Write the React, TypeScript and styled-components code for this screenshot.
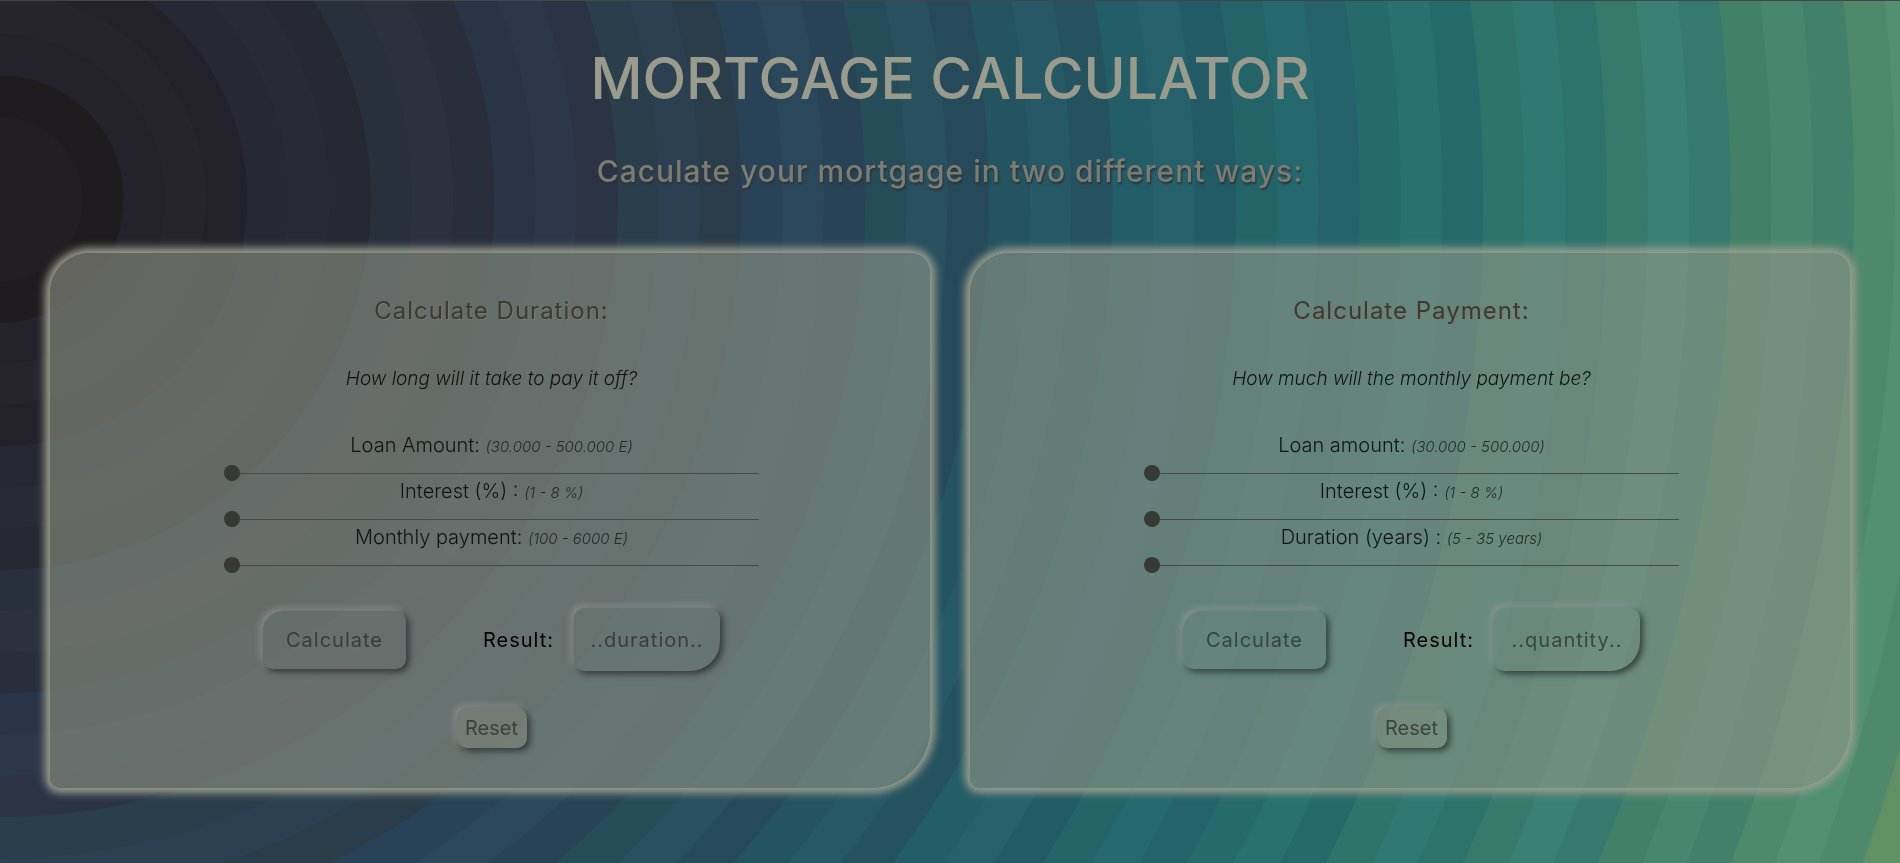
import React, { useState } from "react";
import styled, { createGlobalStyle } from "styled-components";

const GlobalStyle = createGlobalStyle`
  * { box-sizing: border-box; }
  body {
    margin: 0;
    background: #2d736b;
    font-family: Inter, Roboto, "Liberation Sans", sans-serif;
    color: #101413;
  }
`;

const RING = 41.2;
const RINGS = [
  "#221f23", "#221f23", "#1f1c20",
  "#24222b", "#26242d", "#23212a",
  "#262933", "#282b35", "#262832",
  "#282f3d", "#2c313f", "#282e3b",
  "#293546", "#2c3849", "#2a3445",
  "#2b3e4b", "#2c4051", "#2b3d4a",
  "#284357", "#2b475a", "#284256",
  "#264c5a", "#29505f", "#264a5a",
  "#245460", "#275866", "#24535f",
  "#235d67", "#25606b", "#225b65",
  "#246468", "#25696e", "#256269",
  "#256b6b", "#297170", "#256a6b",
  "#2e746b", "#2f7972", "#2d736b",
  "#377a6c", "#3a8173", "#367a6d",
  "#43806a", "#478770", "#42806b",
  "#4f896b", "#529071", "#4e896c",
  "#629065",
];

const Backdrop = styled.svg`
  position: fixed;
  inset: 0;
  width: 100%;
  height: 100%;
  z-index: -1;
`;

const Page = styled.main`
  min-height: 100vh;
  padding: 43px 50px 75px;
  border-top: 1px solid #444546;
`;

const Title = styled.h1`
  margin: 0 0 39px;
  font-size: 57px;
  line-height: 70px;
  font-weight: 500;
  text-align: center;
  text-transform: uppercase;
  color: #999b8d;
`;

const Subtitle = styled.h2`
  margin: 0 0 64px;
  font-size: 30px;
  line-height: 36px;
  font-weight: 500;
  letter-spacing: 1px;
  text-align: center;
  color: #7b7c74;
  text-shadow: 1px 2px 2px #2d3436;
`;

const Cards = styled.div`
  display: grid;
  grid-template-columns: 1fr 1fr;
  gap: 40px;
`;

const Card = styled.form`
  display: flex;
  flex-direction: column;
  align-items: center;
  padding: 43px 0 40px 3px;
  border-radius: 40px 20px 60px 10px;
  background: rgba(147, 151, 136, 0.59);
  box-shadow: 0 0 8px 5px #9c9f8e;
`;

const CardTitle = styled.h3`
  margin: 0 0 41px;
  font-size: 24px;
  line-height: 30px;
  font-weight: 400;
  letter-spacing: 1px;
  color: #3c3a37;
  text-shadow: 1px 1px 1px #7a7c68;
`;

const Question = styled.p`
  margin: 0 0 44px;
  font-size: 19px;
  line-height: 24px;
  font-weight: 300;
  font-style: italic;
`;

const Fields = styled.div`
  width: 61%;
`;

const Field = styled.label`
  display: block;
  font-size: 20px;
  line-height: 20px;
  font-weight: 300;
  text-align: center;
`;

const Hint = styled.em`
  font-size: 15px;
  line-height: 15px;
  color: #242a28;
`;

const Slider = styled.input`
  appearance: none;
  display: block;
  width: 100%;
  height: 16px;
  margin: 10px 0 0;
  background: linear-gradient(#444a47, #444a47) center / 100% 1px no-repeat;

  &::-webkit-slider-thumb {
    appearance: none;
    width: 16px;
    height: 16px;
    border-radius: 50%;
    background: #373936;
  }
`;

const Actions = styled.div`
  display: flex;
  align-items: center;
  gap: 20px;
  margin: 35px 0 37px;
`;

const ResultLabel = styled.label`
  margin-left: 57px;
  font-size: 20px;
  font-weight: 400;
  letter-spacing: 1px;
  color: #000;
`;

const raised = `
  border: 0;
  font: 400 20px Inter, Roboto, "Liberation Sans", sans-serif;
  color: rgba(35, 40, 38, 0.7);
  box-shadow:
    3px 3px 6px rgba(30, 34, 34, 0.7),
    -3px -3px 6px rgba(155, 158, 158, 0.6);
`;

const Calculate = styled.button`
  ${raised}
  width: 143px;
  height: 58px;
  border-radius: 20px 10px 10px 10px;
  background: none;
  letter-spacing: 1px;
`;

const Result = styled.output`
  ${raised}
  display: grid;
  place-items: center;
  width: 146px;
  height: 63px;
  border-radius: 10px 10px 30px 10px;
  letter-spacing: 1px;
`;

const Reset = styled.button`
  ${raised}
  height: 40px;
  width: 70px;
  padding: 0;
  border-radius: 10px;
  background: rgba(138, 142, 124, 0.35);
`;

type FieldSpec = { id: string; label: string; hint: string; min: number; max: number };

type CalculatorProps = {
  id: string;
  title: string;
  question: string;
  placeholder: string;
  fields: FieldSpec[];
  solve: (values: number[]) => string;
};

function Calculator({ id, title, question, placeholder, fields, solve }: CalculatorProps) {
  const [values, setValues] = useState(fields.map((f) => f.min));
  const [result, setResult] = useState(placeholder);

  const submit = (e: React.FormEvent) => {
    e.preventDefault();
    setResult(solve(values));
  };
  const reset = () => {
    setValues(fields.map((f) => f.min));
    setResult(placeholder);
  };

  return (
    <Card onSubmit={submit}>
      <CardTitle>{title}</CardTitle>
      <Question>{question}</Question>
      <Fields>
        {fields.map((f, i) => (
          <Field key={f.id} htmlFor={f.id}>
            {f.label} <Hint>{f.hint}</Hint>
            <Slider
              id={f.id}
              type="range"
              min={f.min}
              max={f.max}
              value={values[i]}
              onChange={(e) => setValues(values.map((v, n) => (n === i ? Number(e.target.value) : v)))}
            />
          </Field>
        ))}
      </Fields>
      <Actions>
        <Calculate type="submit">Calculate</Calculate>
        <ResultLabel htmlFor={id}>Result:</ResultLabel>
        <Result id={id}>{result}</Result>
      </Actions>
      <Reset type="button" onClick={reset}>Reset</Reset>
    </Card>
  );
}

const solveDuration = ([loan, interest, payment]: number[]) => {
  const rate = interest / 1200;
  const left = 1 - (loan * rate) / payment;
  return left > 0 ? `${Math.ceil(-Math.log(left) / Math.log(1 + rate))} months` : "never";
};

const solvePayment = ([loan, interest, years]: number[]) => {
  const rate = interest / 1200;
  return `${((loan * rate) / (1 - (1 + rate) ** (-12 * years))).toFixed(2)} E`;
};

export default function App() {
  return (
    <>
      <GlobalStyle />
      <Backdrop viewBox="0 0 1900 863" preserveAspectRatio="xMinYMin slice" aria-hidden="true">
        {RINGS.map((fill, i) => (
          <circle key={i} cx="0" cy="199" r={(i + 1) * RING} fill={fill} />
        )).reverse()}
      </Backdrop>
      <Page>
        <Title>Mortgage Calculator</Title>
        <Subtitle>Caculate your mortgage in two different ways:</Subtitle>
        <Cards>
          <Calculator
            id="duration-result"
            title="Calculate Duration:"
            question="How long will it take to pay it off?"
            placeholder="..duration.."
            solve={solveDuration}
            fields={[
              { id: "d-loan", label: "Loan Amount:", hint: "(30.000 - 500.000 E)", min: 30000, max: 500000 },
              { id: "d-interest", label: "Interest (%) :", hint: "(1 - 8 %)", min: 1, max: 8 },
              { id: "d-payment", label: "Monthly payment:", hint: "(100 - 6000 E)", min: 100, max: 6000 },
            ]}
          />
          <Calculator
            id="payment-result"
            title="Calculate Payment:"
            question="How much will the monthly payment be?"
            placeholder="..quantity.."
            solve={solvePayment}
            fields={[
              { id: "p-loan", label: "Loan amount:", hint: "(30.000 - 500.000)", min: 30000, max: 500000 },
              { id: "p-interest", label: "Interest (%) :", hint: "(1 - 8 %)", min: 1, max: 8 },
              { id: "p-years", label: "Duration (years) :", hint: "(5 - 35 years)", min: 5, max: 35 },
            ]}
          />
        </Cards>
      </Page>
    </>
  );
}
